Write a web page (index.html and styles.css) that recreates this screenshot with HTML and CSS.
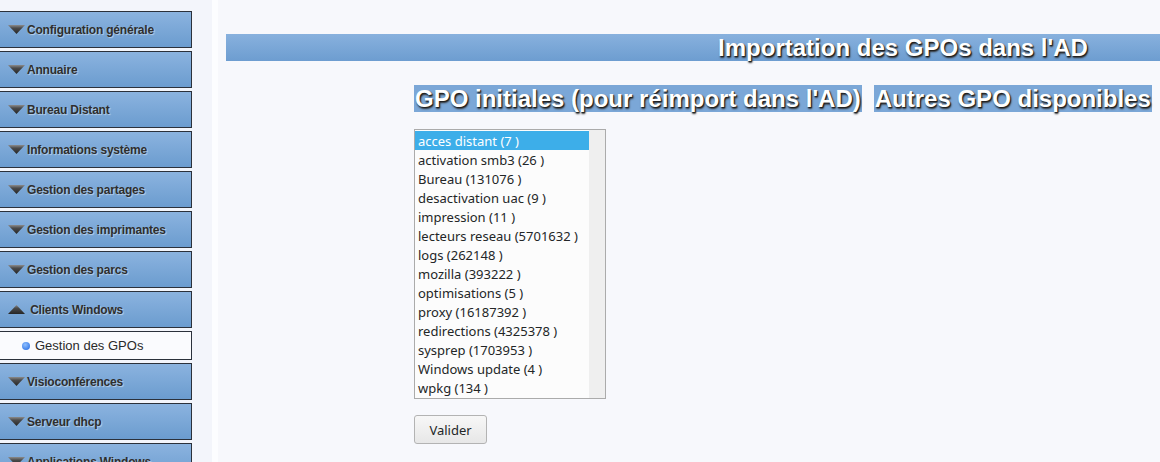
FILE: index.html
```html
<!DOCTYPE html>
<html lang="fr">
<head>
    <meta charset="UTF-8">
    <title>Importation des GPOs</title>
    <link rel="stylesheet" href="styles.css">
</head>
<body>
<div class="page">
    <nav class="menu">
        <div class="menu-item"><svg class="arrow" width="17" height="9" viewBox="0 0 17 9"><defs><linearGradient id="ga" x1="0" y1="0" x2="0" y2="1"><stop offset="0" stop-color="#8c8c8c"/><stop offset="0.35" stop-color="#4a4a4a"/><stop offset="1" stop-color="#262626"/></linearGradient></defs><polygon points="0,0 17,0 8.5,9" fill="url(#ga)"/></svg>Configuration générale</div>
        <div class="menu-item"><svg class="arrow" width="17" height="9" viewBox="0 0 17 9"><polygon points="0,0 17,0 8.5,9" fill="url(#ga)"/></svg>Annuaire</div>
        <div class="menu-item"><svg class="arrow" width="17" height="9" viewBox="0 0 17 9"><polygon points="0,0 17,0 8.5,9" fill="url(#ga)"/></svg>Bureau Distant</div>
        <div class="menu-item"><svg class="arrow" width="17" height="9" viewBox="0 0 17 9"><polygon points="0,0 17,0 8.5,9" fill="url(#ga)"/></svg>Informations système</div>
        <div class="menu-item"><svg class="arrow" width="17" height="9" viewBox="0 0 17 9"><polygon points="0,0 17,0 8.5,9" fill="url(#ga)"/></svg>Gestion des partages</div>
        <div class="menu-item"><svg class="arrow" width="17" height="9" viewBox="0 0 17 9"><polygon points="0,0 17,0 8.5,9" fill="url(#ga)"/></svg>Gestion des imprimantes</div>
        <div class="menu-item"><svg class="arrow" width="17" height="9" viewBox="0 0 17 9"><polygon points="0,0 17,0 8.5,9" fill="url(#ga)"/></svg>Gestion des parcs</div>
        <div class="menu-item open"><svg class="arrow" width="17" height="9" viewBox="0 0 17 9"><polygon points="0,9 17,9 8.5,0" fill="url(#ga)"/></svg>&nbsp;Clients Windows</div>
        <div class="submenu-item"><span class="dot"></span>Gestion des GPOs</div>
        <div class="menu-item"><svg class="arrow" width="17" height="9" viewBox="0 0 17 9"><polygon points="0,0 17,0 8.5,9" fill="url(#ga)"/></svg>Visioconférences</div>
        <div class="menu-item"><svg class="arrow" width="17" height="9" viewBox="0 0 17 9"><polygon points="0,0 17,0 8.5,9" fill="url(#ga)"/></svg>Serveur dhcp</div>
        <div class="menu-item"><svg class="arrow" width="17" height="9" viewBox="0 0 17 9"><polygon points="0,0 17,0 8.5,9" fill="url(#ga)"/></svg>Applications Windows</div>
    </nav>

    <main class="content">
        <h1 class="title-bar">Importation des GPOs dans l'AD</h1>
        <table class="gpo-table">
            <tr>
                <th>GPO initiales (pour réimport dans l'AD)</th>
                <th>Autres GPO disponibles</th>
            </tr>
            <tr>
                <td>
                    <div class="listbox">
                        <ul class="options">
                            <li class="selected">acces distant (7 )</li>
                            <li>activation smb3 (26 )</li>
                            <li>Bureau (131076 )</li>
                            <li>desactivation uac (9 )</li>
                            <li>impression (11 )</li>
                            <li>lecteurs reseau (5701632 )</li>
                            <li>logs (262148 )</li>
                            <li>mozilla (393222 )</li>
                            <li>optimisations (5 )</li>
                            <li>proxy (16187392 )</li>
                            <li>redirections (4325378 )</li>
                            <li>sysprep (1703953 )</li>
                            <li>Windows update (4 )</li>
                            <li>wpkg (134 )</li>
                        </ul>
                        <div class="scroll-track"></div>
                    </div>
                    <button type="button" class="btn">Valider</button>
                </td>
                <td></td>
            </tr>
        </table>
    </main>
</div>
</body>
</html>
```

FILE: styles.css
```css
html, body {
    margin: 0;
    height: 462px;
    overflow: hidden;
}
body {
    font-family: 'Liberation Sans', Arial, sans-serif;
    background: #f7f8fc;
}
.page {
    display: flex;
    align-items: flex-start;
    height: 462px;
}
.menu {
    flex: 0 0 218px;
    height: 100%;
    background: #f3f5fb;
    border-right: 6px solid #fcfdff;
    padding-top: 11px;
    box-sizing: border-box;
}
.menu-item {
    box-sizing: border-box;
    width: 192px;
    height: 37px;
    margin-bottom: 3px;
    border: 1px solid #2b313b;
    border-left: none;
    background: linear-gradient(#8bb3df, #6b9ccf);
    display: flex;
    align-items: center;
    padding-left: 8px;
    font-weight: bold;
    font-size: 12px;
    letter-spacing: -0.2px;
    color: #2e2e2e;
    text-shadow: 1px 1px 1px rgba(255, 255, 255, 0.5);
    white-space: nowrap;
}
.arrow {
    margin-right: 2px;
    flex: none;
}
.submenu-item {
    box-sizing: border-box;
    width: 192px;
    height: 29px;
    margin-bottom: 3px;
    border: 1px solid #2b313b;
    border-left: none;
    background: #fafbfe;
    display: flex;
    align-items: center;
    padding-left: 22px;
    font-size: 13px;
    color: #2a2a2a;
}
.dot {
    width: 8px;
    height: 8px;
    border-radius: 50%;
    background: radial-gradient(circle at 40% 35%, #8fc0ff, #1f66e0);
    margin-right: 5px;
}
.content {
    flex: 1;
    min-width: 0;
    padding: 34px 0 0 8px;
}
.title-bar {
    width: 1354px;
    height: 27px;
    margin: 0;
    background: linear-gradient(#88b1de, #6d9dd0);
    text-align: center;
    font-size: 24px;
    line-height: 27px;
    font-weight: bold;
    color: #fff;
    text-shadow: 1px 1px 1px #1e1e1e, 1px 2px 2px #333;
}
.gpo-table {
    margin: 24px 0 0 176px;
    border-collapse: separate;
    border-spacing: 12px 0;
}
.gpo-table th {
    height: 27px;
    padding: 0 1px;
    background: #7ba7d7;
    font-size: 24px;
    line-height: 27px;
    font-weight: bold;
    color: #fff;
    text-shadow: 1px 1px 1px #1e1e1e, 1px 2px 2px #333;
    white-space: nowrap;
}
.gpo-table td {
    padding: 17px 0 0 0;
    vertical-align: top;
    text-align: left;
}
.listbox {
    display: flex;
    width: 192px;
    height: 270px;
    box-sizing: border-box;
    border: 1px solid #ababab;
    background: #fcfcfc;
}
.options {
    flex: 1;
    list-style: none;
    margin: 0;
    padding: 1px 0 0 0;
    font-family: 'Noto Sans', sans-serif;
    font-size: 13px;
    color: #232627;
}
.options li {
    height: 19px;
    line-height: 20px;
    padding-left: 3px;
    white-space: nowrap;
}
.options li.selected {
    background: #3daee9;
    color: #fff;
}
.scroll-track {
    width: 16px;
    background: #efefef;
}
.btn {
    margin-top: 16px;
    width: 73px;
    height: 29px;
    border: 1px solid #b3b3b3;
    border-radius: 3px;
    background: linear-gradient(#f7f7f7, #e7e7e7);
    font-family: 'Noto Sans', sans-serif;
    font-size: 13px;
    color: #232627;
    cursor: pointer;
}
```
